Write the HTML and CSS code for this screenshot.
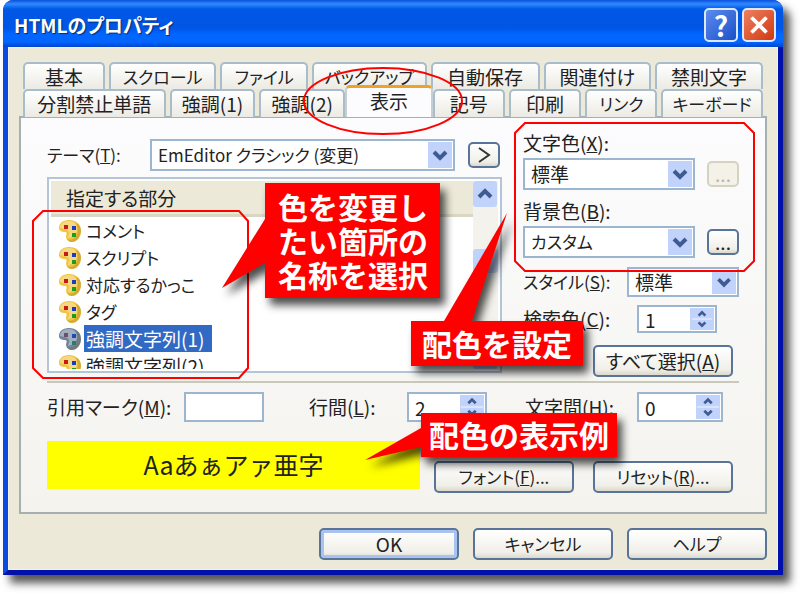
FILE: index.html
```
<!DOCTYPE html>
<html lang="ja">
<head>
    <meta charset="UTF-8">
    <meta name="viewport" content="width=device-width, initial-scale=1.0">
    <title>HTMLのプロパティ</title>
    <link rel="stylesheet" href="styles.css">
</head>
<body>
    <!-- shared symbols -->
    <svg class="symbols" width="0" height="0">
        <symbol id="down" viewBox="0 0 24 26">
            <path d="M6 10l6 6 6-6" fill="none" stroke="#3f5c92" stroke-width="4"/>
        </symbol>
        <symbol id="up" viewBox="0 0 24 26">
            <path d="M6 16l6-6 6 6" fill="none" stroke="#3f5c92" stroke-width="4"/>
        </symbol>
        <symbol id="updown" viewBox="0 0 24 26">
            <path d="M0 13h24" stroke="#dce7ff" stroke-width="2"/>
            <path d="M8 9l4-4 4 4M8 17l4 4 4-4" fill="none" stroke="#3f5c92" stroke-width="3"/>
        </symbol>
        <symbol id="palette" viewBox="0 0 24 24">
            <path d="M11 1C4 1 1 5 1 9c0 3 3 4 6 4 2 0 2 2 1 4 0 4 3 6 6 6 5 0 9-5 9-11 0-7-5-11-12-11z" fill="currentColor"/>
            <path d="M23 11c0 7-4 12-9 12-2 0-4-1-5-3 5 2 9-1 10-5 1-3 1-7-1-11 3 1 5 4 5 7z" fill="#7a5a10" opacity=".25"/>
            <path d="M11 2C5 2 2 5 2 9c4 1 8 1 9 4 1 2-1 4-1 6 5-1 9-4 9-9 0-5-3-8-8-8z" fill="#fff" opacity=".35"/>
        </symbol>
    </svg>

    <div class="dialog">
        <header class="titlebar">
            <h1>HTMLのプロパティ</h1>
            <button type="button" class="caption help" aria-label="ヘルプ">?</button>
            <button type="button" class="caption close" aria-label="閉じる">
                <svg viewBox="0 0 32 32"><path d="M8 8l16 16M24 8L8 24" stroke="#fff" stroke-width="4"/></svg>
            </button>
        </header>

        <form class="client">
            <nav class="tabs tabs-back">
                <button type="button">基本</button>
                <button type="button" class="kana">スクロール</button>
                <button type="button" class="kana">ファイル</button>
                <button type="button" class="kana">バックアップ</button>
                <button type="button">自動保存</button>
                <button type="button">関連付け</button>
                <button type="button">禁則文字</button>
            </nav>
            <nav class="tabs tabs-front">
                <button type="button">分割禁止単語</button>
                <button type="button">強調(1)</button>
                <button type="button">強調(2)</button>
                <button type="button" class="active">表示</button>
                <button type="button">記号</button>
                <button type="button">印刷</button>
                <button type="button" class="kana">リンク</button>
                <button type="button" class="kana">キーボード</button>
            </nav>

            <div class="panel">
                <div class="main">
                    <div class="left">
                        <div class="theme">
                            <label for="theme" class="kana">テーマ(<u>T</u>):</label>
                            <span class="field">
                                <select id="theme" class="kana"><option>EmEditor クラシック (変更)</option></select>
                                <svg><use href="#down"/></svg>
                            </span>
                            <button type="button" class="btn small" aria-label="&gt;">
                                <svg viewBox="0 0 28 22"><path d="M9 4l10 7-10 7" fill="none" stroke="#333" stroke-width="2"/></svg>
                            </button>
                        </div>
                        <div class="listbox">
                            <div class="list-main">
                                <div class="list-head">指定する部分</div>
                                <ul>
                                    <li><svg viewBox="0 0 24 24"><use href="#palette"/><path d="M6 6h4v4H6z" fill="#c81818"/><path d="M14 7h4v4h-4z" fill="#1c3cc8"/><path d="M14 14h4v4h-4z" fill="#18a018"/></svg><span class="kana">コメント</span></li>
                                    <li><svg viewBox="0 0 24 24"><use href="#palette"/><path d="M6 6h4v4H6z" fill="#c81818"/><path d="M14 7h4v4h-4z" fill="#1c3cc8"/><path d="M14 14h4v4h-4z" fill="#18a018"/></svg><span class="kana">スクリプト</span></li>
                                    <li><svg viewBox="0 0 24 24"><use href="#palette"/><path d="M6 6h4v4H6z" fill="#c81818"/><path d="M14 7h4v4h-4z" fill="#1c3cc8"/><path d="M14 14h4v4h-4z" fill="#18a018"/></svg><span class="kana">対応するかっこ</span></li>
                                    <li><svg viewBox="0 0 24 24"><use href="#palette"/><path d="M6 6h4v4H6z" fill="#c81818"/><path d="M14 7h4v4h-4z" fill="#1c3cc8"/><path d="M14 14h4v4h-4z" fill="#18a018"/></svg><span class="kana">タグ</span></li>
                                    <li class="selected"><svg viewBox="0 0 24 24"><use href="#palette"/><path d="M6 6h4v4H6z" fill="#6c4f6c"/><path d="M14 7h4v4h-4z" fill="#1c4cb8"/><path d="M14 14h4v4h-4z" fill="#2c7c6c"/></svg><span>強調文字列(1)</span></li>
                                    <li><svg viewBox="0 0 24 24"><use href="#palette"/><path d="M6 6h4v4H6z" fill="#c81818"/><path d="M14 7h4v4h-4z" fill="#1c3cc8"/><path d="M14 14h4v4h-4z" fill="#18a018"/></svg><span>強調文字列(2)</span></li>
                                </ul>
                            </div>
                            <div class="scrollbar">
                                <svg><use href="#up"/></svg>
                                <div class="thumb"></div>
                                <svg><use href="#down"/></svg>
                            </div>
                        </div>
                    </div>

                    <div class="right">
                        <label for="fore">文字色(<u>X</u>):</label>
                        <div class="color">
                            <span class="field">
                                <select id="fore"><option>標準</option></select>
                                <svg><use href="#down"/></svg>
                            </span>
                            <button type="button" class="btn small" disabled>...</button>
                        </div>
                        <label for="back">背景色(<u>B</u>):</label>
                        <div class="color">
                            <span class="field">
                                <select id="back" class="kana"><option>カスタム</option></select>
                                <svg><use href="#down"/></svg>
                            </span>
                            <button type="button" class="btn small">...</button>
                        </div>
                        <div class="pair">
                            <label for="style" class="kana">スタイル(<u>S</u>):</label>
                            <span class="field style">
                                <select id="style"><option>標準</option></select>
                                <svg><use href="#down"/></svg>
                            </span>
                        </div>
                        <div class="pair">
                            <label for="find">検索色(<u>C</u>):</label>
                            <span class="field find">
                                <input type="number" id="find" value="1">
                                <svg><use href="#updown"/></svg>
                            </span>
                        </div>
                        <button type="button" class="btn all">すべて選択(<u>A</u>)</button>
                    </div>
                </div>

                <div class="spacing">
                    <label for="mark">引用マーク(<u>M</u>):</label>
                    <span class="field"><input type="text" id="mark"></span>
                    <label for="line">行間(<u>L</u>):</label>
                    <span class="field">
                        <input type="number" id="line" value="2">
                        <svg><use href="#updown"/></svg>
                    </span>
                    <label for="char">文字間(<u>H</u>):</label>
                    <span class="field">
                        <input type="number" id="char" value="0">
                        <svg><use href="#updown"/></svg>
                    </span>
                </div>

                <div class="preview">
                    <div class="sample">Aaあぁアァ亜字</div>
                    <button type="button" class="btn kana">フォント(<u>F</u>)...</button>
                    <button type="button" class="btn kana">リセット(<u>R</u>)...</button>
                </div>
            </div>

            <div class="actions">
                <button type="submit" class="btn default">OK</button>
                <button type="button" class="btn kana">キャンセル</button>
                <button type="button" class="btn kana">ヘルプ</button>
            </div>
        </form>
    </div>

    <!-- annotations drawn over the dialog -->
    <svg class="marks" width="800" height="593" viewBox="0 0 800 593">
        <g fill="none" stroke="#f00" stroke-width="2">
            <ellipse cx="383" cy="101" rx="79" ry="33"/>
            <path d="M43 211h196l9 10v147l-9 10H43l-10-10V221z"/>
            <path d="M525 123h219l10 10v128l-10 10H525l-10-10V133z"/>
        </g>
        <g fill="#f00">
            <path d="M265 183h175v115H265v-35l-43 25 43-69z"/>
            <path d="M411 321h33l63-108-35 108h111v45H411z"/>
            <path d="M421 413h196v44H421v-10l-56 13 56-32z"/>
        </g>
    </svg>
    <p class="note note-list">色を変更し<br>たい箇所の<br>名称を選択</p>
    <p class="note note-color">配色を設定</p>
    <p class="note note-sample">配色の表示例</p>
</body>
</html>
```
FILE: styles.css
```
* {
    box-sizing: border-box;
}
body {
    margin: 0;
    background: #fff;
    color: #222;
    font-family: "Noto Sans CJK JP", sans-serif;
    font-size: 19px;
    line-height: 24px;
    font-feature-settings: "palt";
}
.symbols {
    position: absolute;
}
button,
select,
input {
    font: inherit;
    font-feature-settings: inherit;
    color: inherit;
    margin: 0;
    padding: 0;
}
.kana {
    font-size: 17px;
}
.dialog {
    margin: 0 17px 20px 3px;
    border: 5px solid #0a4be0;
    border-width: 0 5px 5px;
    border-right-color: #0010a8;
    border-bottom-color: #0010a8;
    border-radius: 10px 10px 0 0;
    background: #0a4be0;
    box-shadow: 7px 8px 8px #555;
}

/* title bar */
.titlebar {
    display: flex;
    align-items: center;
    gap: 4px;
    height: 47px;
    margin: 0 -5px;
    padding: 3px 7px 0 11px;
    border-radius: 10px 10px 0 0;
    background: linear-gradient(#0a50dc, #2f8bff 4px, #0058e6 9px, #0055e5 28px, #0066ff 34px, #0066ff 42px, #0045cc);
}
.titlebar h1 {
    flex: 1;
    margin: 0;
    color: #fff;
    font-size: 19px;
    text-shadow: 1px 1px 1px #002a80;
}
.caption {
    width: 34px;
    height: 34px;
    border: 2px solid #dce8ff;
    border-radius: 5px;
    color: #fff;
    font-size: 28px;
    font-weight: bold;
    line-height: 28px;
}
.caption svg {
    display: block;
    width: 30px;
    height: 30px;
}
.help {
    background: linear-gradient(135deg, #5b8cf0, #1c50c8);
}
.close {
    background: linear-gradient(135deg, #ee8060, #d03a10);
}

/* tabs */
.client {
    padding: 14px 10px 9px 10px;
    border: 1px solid #f6f3e6;
    background: #ece9d8;
}
.tabs {
    display: grid;
    gap: 4px;
    height: 27px;
    padding: 0 4px;
}
.tabs-back {
    grid-template-columns: 82fr 107fr 88fr 114fr 109fr 107fr 108fr;
}
.tabs-front {
    grid-template-columns: 143fr 86fr 86fr 80fr 72fr 73fr 72fr 102fr;
}
.tabs button {
    border: 2px solid #a9bccb;
    border-bottom: 0;
    border-radius: 5px 5px 0 0;
    background: linear-gradient(#fff, #ebeae3);
    line-height: 24px;
    white-space: nowrap;
}
.tabs .active {
    position: relative;
    height: 32px;
    margin: -4px -4px 0;
    padding-bottom: 4px;
    border-color: #c5ced0;
    border-top: 3px solid #efa22a;
    background: #fcfcfe;
}

/* panel */
.panel {
    padding: 13px 26px 19px 26px;
    border: 2px solid #a5b0b0;
    background: linear-gradient(#fcfcfe, #f4f3ee);
}
.main {
    display: grid;
    grid-template-columns: 1fr 216px;
    gap: 21px;
    height: 252px;
    border-bottom: 2px solid #c9c8bb;
}
.field {
    position: relative;
    display: block;
    height: 32px;
}
.field select,
.field input {
    display: block;
    width: 100%;
    height: 100%;
    padding: 0 6px;
    border: 2px solid #9db6d0;
    border-radius: 0;
    background: #fff;
    appearance: none;
}
.field input::-webkit-inner-spin-button {
    appearance: none;
}
.field svg {
    position: absolute;
    top: 3px;
    right: 3px;
    width: 24px;
    height: calc(100% - 6px);
    background: #c1d2fb;
    pointer-events: none;
}
.btn {
    height: 32px;
    border: 2px solid #587599;
    border-radius: 5px;
    background: linear-gradient(#fff, #f0efe9 80%, #dcd8cc);
    line-height: 24px;
    white-space: nowrap;
}
.small {
    width: 32px;
    height: 26px;
    line-height: 16px;
}
.small svg {
    display: block;
    width: 28px;
    height: 22px;
}
.small:disabled {
    border-color: #d5d2c2;
    background: #f3f1e8;
    color: #b9b6a5;
}
.theme {
    display: grid;
    grid-template-columns: 90px 1fr 32px;
    gap: 13px;
    align-items: center;
    margin: 8px 2px 6px 0;
}

/* list */
.listbox {
    display: flex;
    height: 196px;
    padding: 2px;
    border: 2px solid #b4c5d8;
    background: #fff;
    overflow: hidden;
}
.list-main {
    flex: 1;
}
.list-head {
    height: 36px;
    padding: 5px 15px;
    border-bottom: 3px solid #dad6c4;
    background: #ece9d8;
}
.listbox ul {
    margin: 0;
    padding: 0 0 0 7px;
    list-style: none;
    height: 152px;
    overflow: hidden;
}
.listbox li {
    display: flex;
    align-items: center;
    gap: 2px;
    height: 27px;
}
.listbox li svg {
    width: 24px;
    height: 24px;
    color: #f2c440;
}
.listbox li span {
    padding: 0 2px;
    line-height: 27px;
}
.listbox .selected svg {
    color: #70849c;
}
.listbox .selected span {
    padding-right: 8px;
    background: #316ac5;
    color: #fff;
}
.scrollbar {
    display: flex;
    flex-direction: column;
    width: 25px;
    background: #f3f2ec;
}
.scrollbar svg {
    width: 24px;
    height: 26px;
    border-radius: 3px;
    background: #c1d2fb;
}
.scrollbar .thumb {
    height: 24px;
    margin: 42px 0 auto;
    border-radius: 3px;
    background: #c1d2fb;
}

/* colour settings */
.right > label {
    display: block;
    height: 27px;
}
.color {
    display: grid;
    grid-template-columns: 1fr 32px;
    gap: 12px;
    align-items: center;
    margin-bottom: 9px;
}
.color .small {
    line-height: 12px;
}
.pair {
    display: flex;
    justify-content: space-between;
    align-items: center;
    margin-top: 8px;
}
.pair .style {
    width: 112px;
    height: 30px;
}
.pair .find {
    width: 80px;
    height: 28px;
    margin-right: 22px;
}
.all {
    display: block;
    width: 140px;
    margin: 12px 6px 0 auto;
}

/* lower part */
.spacing {
    display: grid;
    grid-template-columns: 137px 80px 143px 80px 1fr 86px;
    align-items: center;
    padding: 9px 16px 0 0;
}
.spacing .field {
    height: 30px;
}
.spacing label:nth-of-type(2) {
    padding-left: 45px;
}
.spacing label:nth-of-type(3) {
    padding-left: 38px;
}
.preview {
    display: grid;
    grid-template-columns: 1fr 140px 140px;
    gap: 19px;
    align-items: start;
    padding: 19px 6px 0 0;
}
.preview .btn {
    margin-top: 20px;
}
.sample {
    height: 48px;
    margin-right: -5px;
    background: #ff0;
    font-size: 25px;
    font-feature-settings: normal;
    line-height: 46px;
    text-align: center;
}
.actions {
    display: flex;
    justify-content: flex-end;
    gap: 14px;
    padding: 14px 0 0;
}
.actions .btn {
    width: 140px;
}
.default {
    box-shadow: inset 0 0 0 3px #a9c3f0;
}

/* annotations */
.marks {
    position: absolute;
    top: 0;
    left: 0;
    pointer-events: none;
}
.marks g + g {
    filter: drop-shadow(5px 7px 4px rgba(0, 0, 0, 0.7));
}
.note {
    position: absolute;
    margin: 0;
    color: #fff;
    font-size: 30px;
    font-weight: bold;
    font-feature-settings: normal;
    line-height: 34px;
    white-space: nowrap;
}
.note-list {
    top: 189px;
    left: 278px;
}
.note-color {
    top: 326px;
    left: 422px;
}
.note-sample {
    top: 417px;
    left: 429px;
}
```
